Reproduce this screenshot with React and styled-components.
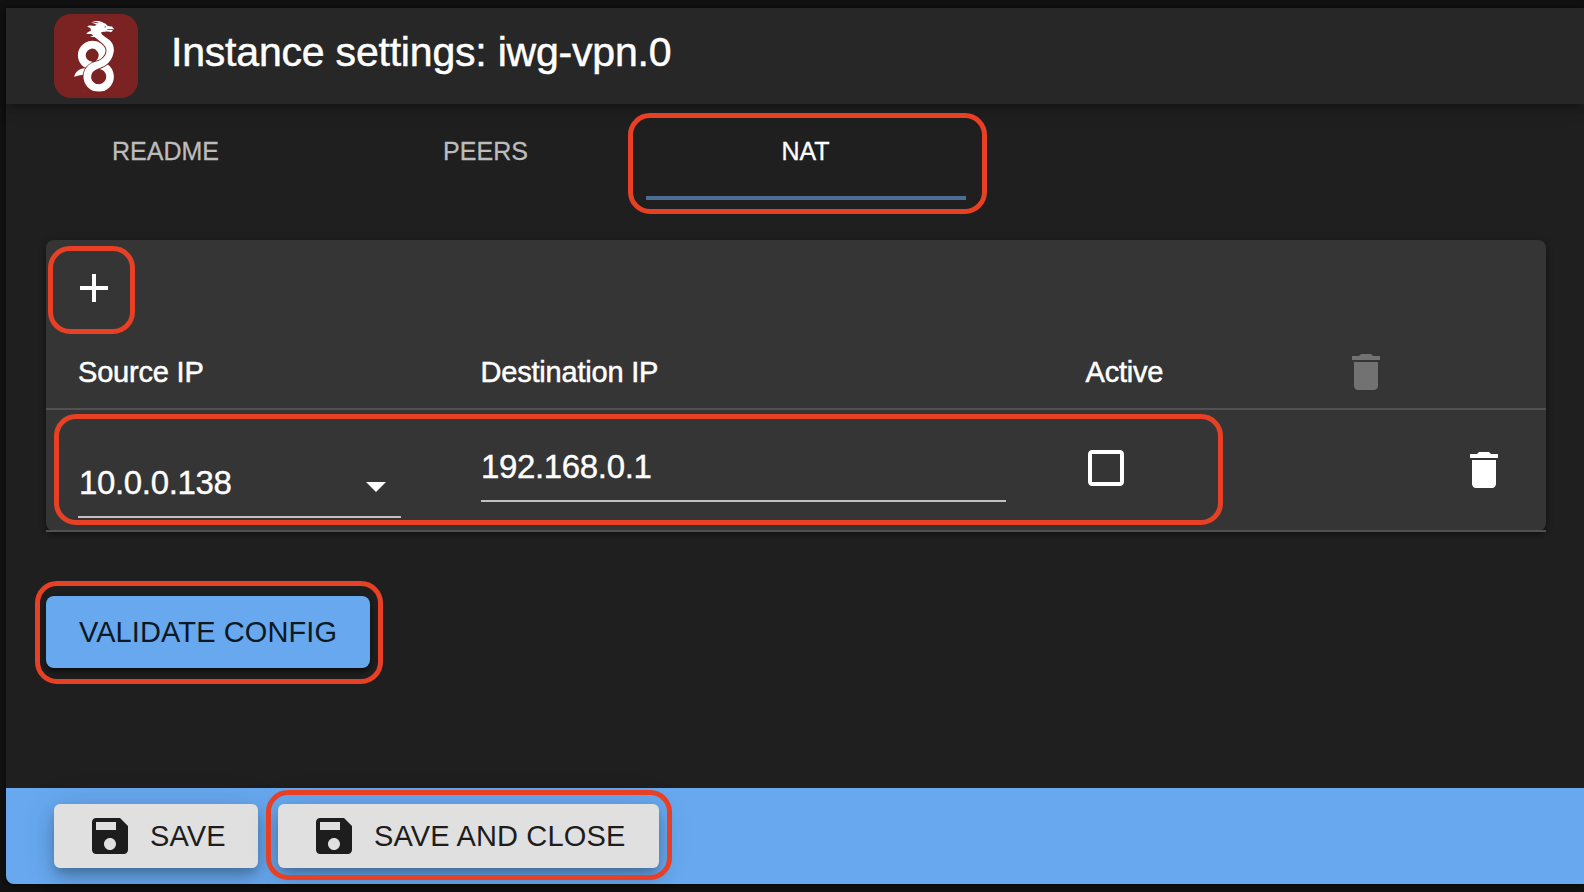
import React from "react";
import styled, { createGlobalStyle } from "styled-components";
import { SiWireguard } from "react-icons/si";

const GlobalStyle = createGlobalStyle`
  * { box-sizing: border-box; }
  html, body { margin: 0; background: #121212; }
  body {
    width: 1584px;
    height: 892px;
    overflow: hidden;
    font-family: "Liberation Sans", Arial, sans-serif;
    color: #fff;
  }
`;

const Page = styled.div`
  width: 1584px;
  height: 892px;
  padding: 8px 0 8px 6px;
  overflow: hidden;
  background: #121212;
`;

const Dialog = styled.main`
  display: flex;
  flex-direction: column;
  height: 876px;
  background: #1f1f1f;
  border-bottom-left-radius: 8px;
  box-shadow: 0 2px 8px rgba(0, 0, 0, 0.55);
`;

const Header = styled.header`
  display: flex;
  flex: none;
  align-items: flex-start;
  gap: 33px;
  height: 96px;
  padding: 6px 48px;
  background: #272727;
  box-shadow: 0 4px 8px -2px rgba(0, 0, 0, 0.25), 0 4px 18px rgba(0, 0, 0, 0.2);
`;

const Logo = styled.div`
  position: relative;
  flex: none;
  width: 84px;
  height: 84px;
  border-radius: 17px;
  overflow: hidden;
  background: #7b2322;

  &::before {
    content: "";
    position: absolute;
    left: 17px;
    top: 6.5px;
    width: 46px;
    height: 71px;
    border-radius: 18px;
    background: #fff;
    clip-path: polygon(17px 0, 100% 0, 100% 100%, 0 100%, 0 12px, 12px 12px);
  }

  svg {
    position: absolute;
    left: 5.5px;
    top: 6px;
    width: 73px;
    height: 73px;
    color: #7b2322;
  }
`;

const Title = styled.h1`
  margin: 14px 0 0;
  font-size: 41px;
  line-height: 48px;
  font-weight: 400;
  letter-spacing: -0.2px;
  white-space: nowrap;
  -webkit-text-stroke: 0.5px currentColor;
`;

const Tabs = styled.nav`
  display: flex;
  flex: none;
  height: 96px;
`;

const Tab = styled.button`
  position: relative;
  width: 320px;
  padding: 2px 1px 0 0;
  border: 0;
  border-bottom: 4px solid ${(p) => (p.$active ? "#4d6d94" : "transparent")};
  background: none;
  color: ${(p) => (p.$active ? "#fff" : "#bcbcbc")};
  font: 400 25px/40px "Liberation Sans", Arial, sans-serif;
  letter-spacing: 0;
  -webkit-text-stroke: 0.3px currentColor;
`;

const Highlight = styled.span`
  position: absolute;
  z-index: 2;
  inset: ${(p) => p.$inset};
  border: 5px solid #e84025;
  border-radius: 22px;
  pointer-events: none;
`;

const Content = styled.section`
  flex: 1;
  padding: 40px 38px 0 40px;
`;

const Panel = styled.div`
  height: 291px;
  border-radius: 8px;
  background: #353535;
  box-shadow: 0 4px 4px rgba(0, 0, 0, 0.28), 0 1px 8px rgba(0, 0, 0, 0.2);
`;

const Toolbar = styled.div`
  display: flex;
  height: 96px;
  padding: 24px 24px 0;
`;

const IconButton = styled.button`
  position: relative;
  display: block;
  width: 48px;
  height: 48px;
  padding: 0;
  border: 0;
  background: none;
  color: ${(p) => (p.$disabled ? "#727272" : "#fff")};

  svg { display: block; }
`;

const Row = styled.div`
  position: relative;
  display: grid;
  grid-template-columns: 402px 605px 257px 118px 48px;
  align-items: center;
  height: ${(p) => p.$height}px;
  padding: ${(p) => p.$padding};
  border-bottom: 2px solid #515151;
`;

const HeadCell = styled.div`
  padding-left: ${(p) => p.$shift || 0}px;
  font-size: 29px;
  line-height: 36px;
  letter-spacing: -0.2px;
  -webkit-text-stroke: 0.5px currentColor;
`;

const Field = styled.div`
  display: flex;
  justify-content: space-between;
  align-items: flex-start;
  align-self: start;
  width: ${(p) => p.$width}px;
  height: ${(p) => p.$height}px;
  margin: ${(p) => p.$top}px 0 0 ${(p) => p.$left || 0}px;
  padding: 10px 1px 0 ${(p) => p.$indent || 0}px;
  border-bottom: 2px solid #c1c1c1;
  font-size: 33px;
  line-height: 42px;
  letter-spacing: -0.35px;
  -webkit-text-stroke: 0.4px currentColor;
`;

const CheckSlot = styled.div`
  margin: -4px 0 0 -3px;
`;

const ValidateButton = styled.button`
  position: relative;
  display: block;
  width: 324px;
  height: 72px;
  margin-top: 65px;
  padding: 0;
  border: 0;
  border-radius: 8px;
  background: #67a8ef;
  color: #0d1822;
  font: 400 29px/50px "Liberation Sans", Arial, sans-serif;
  letter-spacing: 0.1px;
  white-space: nowrap;
  box-shadow: 0 6px 2px -4px rgba(0, 0, 0, 0.2), 0 4px 4px rgba(0, 0, 0, 0.3), 0 2px 10px rgba(0, 0, 0, 0.25);
`;

const Footer = styled.footer`
  display: flex;
  flex: none;
  gap: 20px;
  height: 96px;
  padding: 16px 48px;
  background: #67a8ef;
  border-bottom-left-radius: 8px;
`;

const ActionButton = styled.button`
  position: relative;
  display: flex;
  align-items: center;
  gap: 16px;
  width: ${(p) => p.$width}px;
  height: 64px;
  padding: 0 0 0 32px;
  border: 0;
  border-radius: 6px;
  background: #e0e0e0;
  color: #1d1d1d;
  font: 400 29px/50px "Liberation Sans", Arial, sans-serif;
  letter-spacing: 0.15px;
  white-space: nowrap;
  box-shadow: 0 6px 10px -2px rgba(0, 0, 0, 0.2), 0 12px 20px rgba(0, 0, 0, 0.14), 0 2px 36px rgba(0, 0, 0, 0.12);

  svg { flex: none; }
`;

const paths = {
  add: "M19 13h-6v6h-2v-6H5v-2h6V5h2v6h6v2z",
  trash: "M6 19c0 1.1.9 2 2 2h8c1.1 0 2-.9 2-2V7H6v12zM19 4h-3.5l-1-1h-5l-1 1H5v2h14V4z",
  arrow: "M7 10l5 5 5-5z",
  box: "M19 5v14H5V5h14m0-2H5c-1.1 0-2 .9-2 2v14c0 1.1.9 2 2 2h14c1.1 0 2-.9 2-2V5c0-1.1-.9-2-2-2z",
  save: "M17 3H5c-1.11 0-2 .9-2 2v14c0 1.1.89 2 2 2h14c1.1 0 2-.9 2-2V7l-4-4zm-5 16c-1.66 0-3-1.34-3-3s1.34-3 3-3 3 1.34 3 3-1.34 3-3 3zm3-10H5V5h10v4z",
};

const Icon = ({ name }) => (
  <svg width="48" height="48" viewBox="0 0 24 24" fill="currentColor" aria-hidden="true">
    <path d={paths[name]} />
  </svg>
);

export default function App() {
  return (
    <Page>
      <GlobalStyle />
      <Dialog>
        <Header>
          <Logo><SiWireguard /></Logo>
          <Title>Instance settings: iwg-vpn.0</Title>
        </Header>
        <Tabs>
          <Tab>README</Tab>
          <Tab>PEERS</Tab>
          <Tab $active>
            NAT
            <Highlight $inset="9px -21px -18px -18px" />
          </Tab>
        </Tabs>
        <Content>
          <Panel>
            <Toolbar>
              <IconButton aria-label="Add">
                <Icon name="add" />
                <Highlight $inset="-18px -17px -22px -22px" />
              </IconButton>
            </Toolbar>
            <Row $height={74} $padding="0 0 0 32px">
              <HeadCell>Source IP</HeadCell>
              <HeadCell $shift={0.5}>Destination IP</HeadCell>
              <HeadCell $shift={0.5}>Active</HeadCell>
              <IconButton $disabled aria-label="Delete all"><Icon name="trash" /></IconButton>
            </Row>
            <Row $height={122} $padding="0 0 0 32px">
              <Field $width={323} $height={66} $top={42} $indent={1}>
                <span>10.0.0.138</span>
                <Icon name="arrow" />
              </Field>
              <Field $width={525} $height={66} $top={26} $left={1}>
                <span>192.168.0.1</span>
              </Field>
              <CheckSlot>
                <IconButton role="checkbox" aria-checked="false" aria-label="Active"><Icon name="box" /></IconButton>
              </CheckSlot>
              <span />
              <IconButton aria-label="Delete"><Icon name="trash" /></IconButton>
              <Highlight $inset="4px 323px 5px 8px" />
            </Row>
          </Panel>
          <ValidateButton>
            VALIDATE CONFIG
            <Highlight $inset="-15px -13px -16px -11px" />
          </ValidateButton>
        </Content>
        <Footer>
          <ActionButton $width={204}>
            <Icon name="save" />
            SAVE
          </ActionButton>
          <ActionButton $width={381}>
            <Icon name="save" />
            SAVE AND CLOSE
            <Highlight $inset="-14px -13px -12px -12px" />
          </ActionButton>
        </Footer>
      </Dialog>
    </Page>
  );
}
